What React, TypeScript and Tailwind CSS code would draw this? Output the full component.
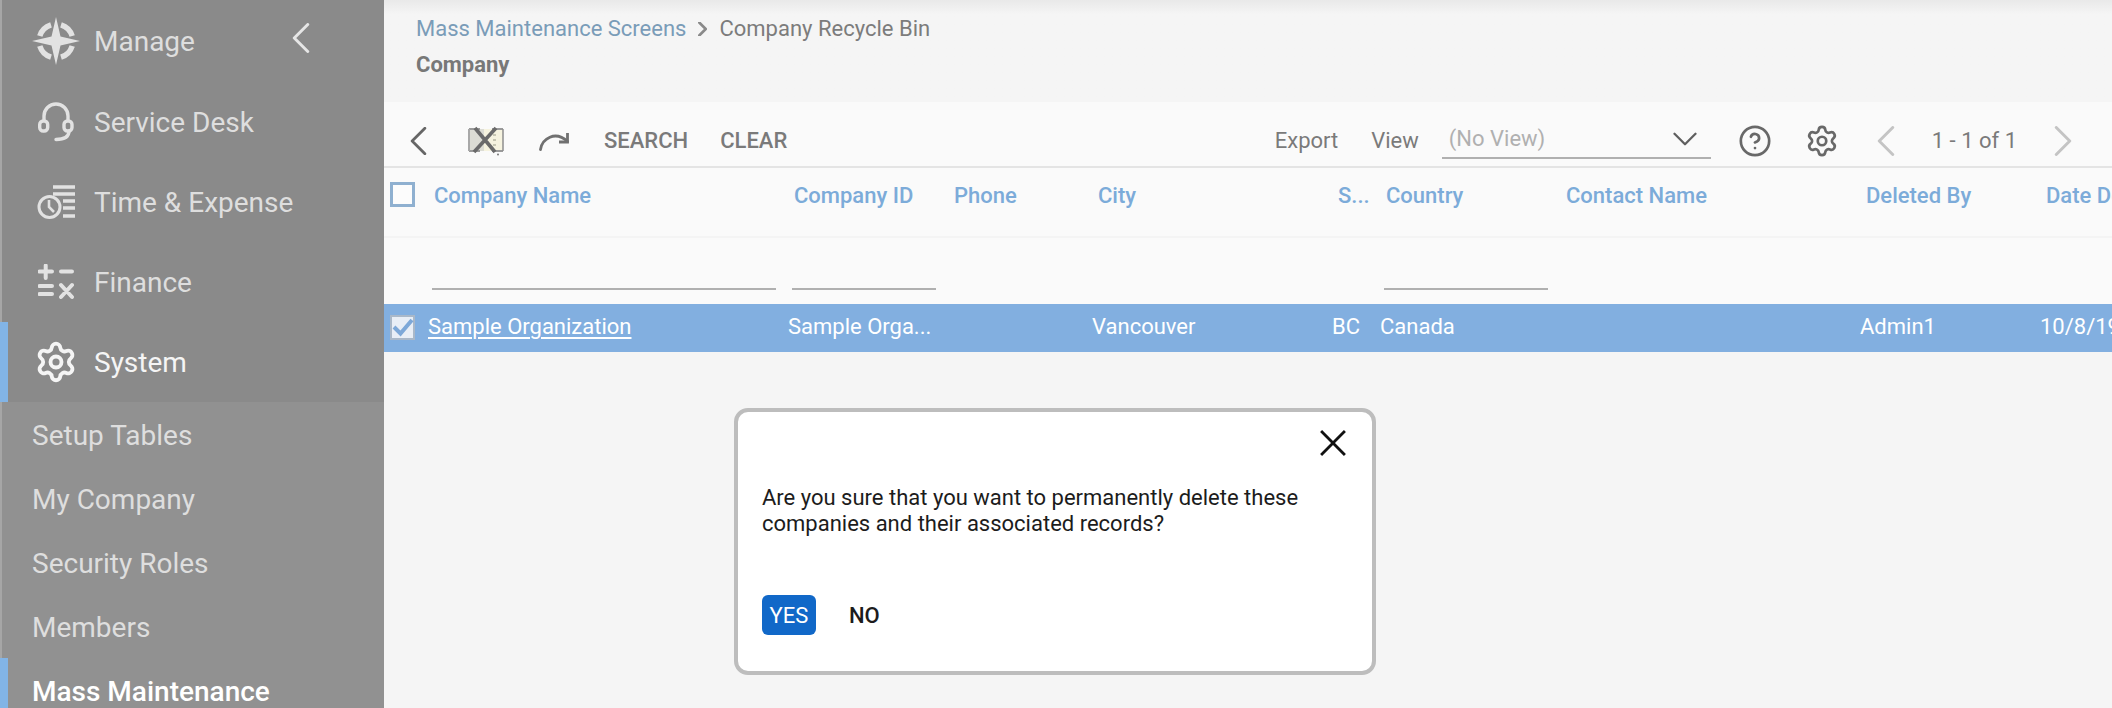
import { Settings, CircleHelp } from "lucide-react";
import type { ReactNode } from "react";

const gridCols =
  "grid grid-cols-[44px_360px_160px_144px_240px_48px_180px_300px_180px_300px]";

function Chevron({
  dir,
  className,
  weight = 2.6,
}: {
  dir: "left" | "right" | "down";
  className: string;
  weight?: number;
}) {
  const points =
    dir === "left" ? "14,1 2,13 14,25" : dir === "right" ? "2,1 14,13 2,25" : "1,2 13,14 25,2";
  return (
    <svg viewBox={dir === "down" ? "0 0 26 16" : "0 0 16 26"} fill="none" className={className}>
      <polyline points={points} stroke="currentColor" strokeWidth={weight} strokeLinecap="round" strokeLinejoin="round" />
    </svg>
  );
}

function CompassIcon() {
  return (
    <svg viewBox="0 0 48 48" className="h-[48px] w-[48px]" fill="#e2e2e2">
      <path d="M24 0L28.500 19.500L48 24L28.500 28.500L24 48L19.500 28.500L0 24L19.500 19.500Z" />
      <path
        d="M29 7.800A17 17 0 0 1 40.200 19M40.200 29A17 17 0 0 1 29 40.200M19 40.200A17 17 0 0 1 7.800 29M7.800 19A17 17 0 0 1 19 7.800"
        fill="none"
        stroke="#e2e2e2"
        strokeWidth="5.500"
      />
    </svg>
  );
}

function HeadsetIcon() {
  return (
    <svg viewBox="0 0 36 40" className="h-[40px] w-[36px]" fill="none" stroke="#e2e2e2" strokeWidth="3.400">
      <path d="M6 20V14a12 12 0 0 1 24 0v6" />
      <rect x="1.700" y="19" width="8" height="10" rx="3.500" />
      <rect x="26" y="19" width="8" height="10" rx="3.500" />
      <path d="M31 29c0 6-5 8.500-13 8.500" strokeLinecap="round" />
    </svg>
  );
}

function TimeIcon() {
  return (
    <svg viewBox="0 0 38 34" className="h-[34px] w-[38px]" fill="none" stroke="#e2e2e2">
      <path d="M16 2H38M16 9H38M26 16H38M26 23H38M26 31H38" strokeWidth="3.600" />
      <circle cx="12.500" cy="22" r="10.500" strokeWidth="3" />
      <path d="M12 15V22L17 27" strokeWidth="2.600" />
    </svg>
  );
}

function FinanceIcon() {
  return (
    <svg viewBox="0 0 36 36" className="h-[36px] w-[36px]" fill="none" stroke="#e2e2e2" strokeWidth="4" strokeLinecap="round">
      <path d="M1.500 7.500H14M7.700 1.500V14M23 7.500H34M1.500 22H14M1.500 30H14M23 21L34 33M34 21L23 33" />
    </svg>
  );
}

function RedoIcon() {
  return (
    <svg viewBox="0 0 30 19" className="h-[19px] w-[30px]" fill="none" stroke="#707070" strokeWidth="2.800" strokeLinecap="round">
      <path d="M1.500 17.500C3 7 16 -2 28.500 9.500" />
      <path d="M28.500 1V10H20" strokeLinecap="butt" />
    </svg>
  );
}

function DeleteGridIcon() {
  return (
    <svg viewBox="0 0 36 30" className="h-[30px] w-[36px] blur-[0.7px]" fill="none">
      <rect x="1" y="3" width="34" height="22" fill="#f6f3df" />
      <rect x="1" y="3" width="15" height="22" fill="#dcdcd4" />
      <path d="M1 3H12M24 3H35M1 25H12M24 25H35" stroke="#9a9a9a" strokeWidth="2" />
      <path d="M1 3V25" stroke="#a8a8a8" strokeWidth="2" />
      <path d="M35 3V25" stroke="#8e8e8e" strokeWidth="1.500" />
      <path d="M7 2L27 26M28 2L6 26" stroke="#6a6a6a" strokeWidth="3.600" />
      <path d="M25 9H28M25 14H28M25 19H28" stroke="#b8b8a4" strokeWidth="1.500" />
      <circle cx="30" cy="28.500" r="1" fill="#777777" />
    </svg>
  );
}

function NavRow({
  icon,
  label,
  active,
  tall,
  children,
}: {
  icon: ReactNode;
  label: string;
  active?: boolean;
  tall?: boolean;
  children?: ReactNode;
}) {
  return (
    <div
      className={`relative flex shrink-0 items-center ${tall ? "h-[81px]" : "h-[80px]"} ${
        active ? "border-l-[8px] border-[#82b4e6] text-[#f5f5f5]" : "border-l-2 border-[#a6a6a6] text-[#dedede]"
      }`}
    >
      <span className={`flex w-[60px] shrink-0 items-center justify-center ${active ? "ml-[18px]" : "ml-[24px]"}`}>{icon}</span>
      <span className="ml-[8px] pt-[2px] text-[28px] leading-none">{label}</span>
      {children}
    </div>
  );
}

function SubRow({ label, active }: { label: string; active?: boolean }) {
  return (
    <div
      className={`flex h-[64px] shrink-0 items-center pt-[3px] text-[28px] leading-none ${
        active
          ? "border-l-[8px] border-[#82b4e6] pl-[24px] font-medium text-white"
          : "border-l-2 border-[#a6a6a6] pl-[30px] text-[#dedede]"
      }`}
    >
      {label}
    </div>
  );
}

function Sidebar() {
  return (
    <aside className="flex h-full w-[384px] shrink-0 flex-col overflow-hidden bg-[#8a8a8a]">
      <NavRow tall icon={<CompassIcon />} label="Manage">
        <Chevron dir="left" className="absolute left-[290px] top-[23px] h-[30px] w-[18px] text-[#e6e6e6]" />
      </NavRow>
      <NavRow tall icon={<HeadsetIcon />} label="Service Desk" />
      <NavRow icon={<TimeIcon />} label="Time & Expense" />
      <NavRow icon={<FinanceIcon />} label="Finance" />
      <NavRow active icon={<Settings size={44} color="#f5f5f5" strokeWidth={2.1} />} label="System" />
      <div className="flex flex-1 flex-col bg-[#919191]">
        <SubRow label="Setup Tables" />
        <SubRow label="My Company" />
        <SubRow label="Security Roles" />
        <SubRow label="Members" />
        <SubRow active label="Mass Maintenance" />
      </div>
    </aside>
  );
}

function Toolbar() {
  return (
    <div className="flex h-[66px] items-center justify-between border-b-2 border-[#e4e4e4] bg-[#fafafa] pt-[14px]">
      <div className="flex items-center text-[#7a7a7a]">
        <Chevron dir="left" className="ml-[26px] h-[28px] w-[17px] text-[#666666]" />
        <span className="ml-[41px] flex"><DeleteGridIcon /></span>
        <span className="ml-[35px] flex"><RedoIcon /></span>
        <span className="ml-[35px] text-[22px] font-medium leading-none">SEARCH</span>
        <span className="ml-[32px] text-[22px] font-medium leading-none">CLEAR</span>
      </div>
      <div className="flex items-center text-[22px] leading-none text-[#7a7a7a]">
        <span>Export</span>
        <span className="ml-[33px]">View</span>
        <div className="ml-[23px] flex h-[36px] w-[269px] items-center justify-between border-b-2 border-[#b0b0b0] pb-[3px] pl-[7px] pr-[14px]">
          <span className="text-[#b0b0b0]">(No View)</span>
          <Chevron dir="down" className="h-[14px] w-[24px] text-[#5f5f5f]" />
        </div>
        <CircleHelp size={34} strokeWidth={1.9} className="ml-[27px] text-[#686868]" />
        <Settings size={34} strokeWidth={1.9} className="ml-[33px] text-[#686868]" />
        <Chevron dir="left" className="ml-[38px] h-[30px] w-[18px] text-[#c4c4c4]" />
        <span className="ml-[37px] text-[#7a7a7a]">1 - 1 of 1</span>
        <Chevron dir="right" className="ml-[37px] mr-[40px] h-[30px] w-[18px] text-[#c4c4c4]" />
      </div>
    </div>
  );
}

function TableHead() {
  const labels = ["Company Name", "Company ID", "Phone", "City", "S...", "Country", "Contact Name", "Deleted By", "Date Deleted"];
  return (
    <div className={`${gridCols} h-[70px] border-b-2 border-[#f4f4f4] bg-[#fafafa] pt-[15px]`}>
      <div className="-mt-[1px] pl-[6px]">
        <div className="h-[25px] w-[25px] border-[3px] border-[#8fb0d0] bg-[#fcfcfc]" />
      </div>
      {labels.map((label) => (
        <div key={label} className="whitespace-nowrap pl-[6px] text-[22px] font-medium leading-[25px] text-[#7cabd9]">
          {label}
        </div>
      ))}
    </div>
  );
}

function FilterRow() {
  return (
    <div className={`${gridCols} h-[66px] items-end bg-[#fafafa] pb-[14px]`}>
      <div />
      <div className="ml-[4px] h-[2px] w-[344px] bg-[#b0b0b0]" />
      <div className="ml-[4px] h-[2px] w-[144px] bg-[#b0b0b0]" />
      <div />
      <div />
      <div />
      <div className="ml-[4px] h-[2px] w-[164px] bg-[#b0b0b0]" />
    </div>
  );
}

function SelectedRow() {
  const cell = "whitespace-nowrap pb-[2px] text-[22px] leading-none text-white";
  return (
    <div className={`${gridCols} h-[48px] items-center bg-[#82afe0]`}>
      <div className="-mt-[1px] pl-[6px]">
        <svg viewBox="0 0 25 25" className="h-[25px] w-[25px]" fill="none">
          <rect x="1" y="1" width="23" height="23" fill="#e8eef6" stroke="#a9b8c9" strokeWidth="2" />
          <path d="M4 12L10.500 18.500L22 5" stroke="#7da8d8" strokeWidth="4" />
        </svg>
      </div>
      <a className={`${cell} underline underline-offset-[3px]`}>Sample Organization</a>
      <div className={cell}>Sample Orga...</div>
      <div />
      <div className={cell}>Vancouver</div>
      <div className={cell}>BC</div>
      <div className={cell}>Canada</div>
      <div />
      <div className={cell}>Admin1</div>
      <div className={cell}>10/8/19</div>
    </div>
  );
}

function ConfirmDialog() {
  return (
    <div className="absolute left-[350px] top-[408px] h-[267px] w-[642px] rounded-[14px] border-4 border-[#bdbdbd] bg-white text-[22px] text-[#1c1c1c]">
      <svg viewBox="0 0 24 24" className="absolute right-[26px] top-[18px] h-[26px] w-[26px]" fill="none">
        <path d="M1 1L23 23M23 1L1 23" stroke="#111111" strokeWidth="2.600" />
      </svg>
      <p className="ml-[24px] mt-[73px] w-[590px] leading-[26px]">
        Are you sure that you want to permanently delete these companies and their associated records?
      </p>
      <div className="ml-[24px] mt-[58px] flex items-center">
        <button type="button" className="h-[40px] w-[54px] rounded-[6px] bg-[#1168c8] text-[22px] text-white">
          YES
        </button>
        <button type="button" className="ml-[33px] text-[22px] font-medium text-[#1c1c1c]">
          NO
        </button>
      </div>
    </div>
  );
}

export default function App() {
  return (
    <div className="flex h-[708px] w-[2112px] overflow-hidden font-['Roboto',sans-serif]">
      <Sidebar />
      <main className="relative min-w-0 flex-1 overflow-hidden bg-[#f5f5f5]">
        <header className="h-[102px] bg-gradient-to-b from-[#e9e9e9] via-[#f5f5f5] via-[14%] to-[#f5f5f5] pl-[32px] pt-[17px]">
          <div className="flex h-[24px] items-center text-[22px] leading-none">
            <span className="text-[#7a9cb8]">Mass Maintenance Screens</span>
            <Chevron dir="right" className="ml-[12px] h-[14px] w-[9px] text-[#8a8a8a]" weight={5} />
            <span className="ml-[12px] text-[#7c7c7c]">Company Recycle Bin</span>
          </div>
          <div className="mt-[13px] text-[22px] font-bold leading-none text-[#787878]">Company</div>
        </header>
        <Toolbar />
        <TableHead />
        <FilterRow />
        <SelectedRow />
        <ConfirmDialog />
      </main>
    </div>
  );
}
